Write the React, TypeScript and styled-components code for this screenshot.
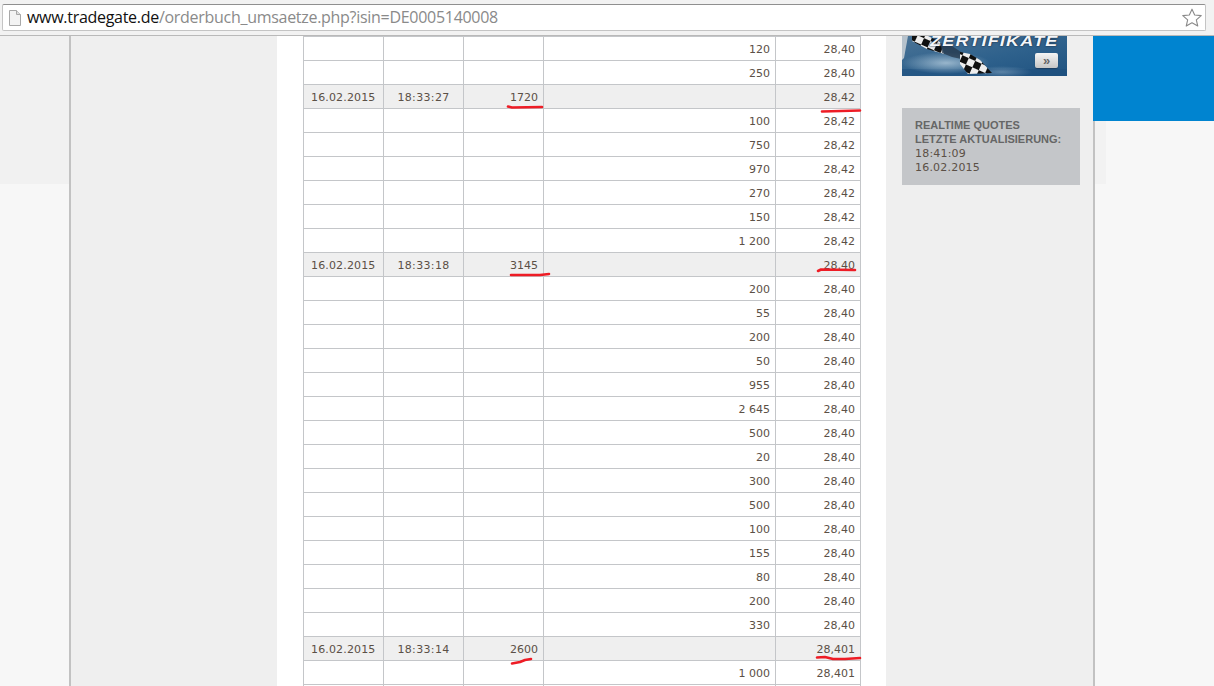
import React from 'react';
import styled, { createGlobalStyle } from 'styled-components';

const Global = createGlobalStyle`
  html, body { margin: 0; padding: 0; height: 100%; overflow: hidden; background: #f7f7f7; }
  #root { height: 100%; }
`;
const Screen = styled.div`
  width: 1214px; height: 686px; display: flex; flex-direction: column; overflow: hidden;
`;
const BrowserBar = styled.header`
  height: 36px; box-sizing: border-box; flex: none; padding: 4px 8px 4px 2px;
  background: #f2f2f2; border-bottom: 1px solid #b9b9b9;
`;
const Omnibox = styled.div`
  height: 27px; box-sizing: border-box; display: flex; align-items: center; gap: 7px; padding: 0 3px 0 6px;
  background: #fff; border: 1px solid #c4c4c4; border-top-color: #8f8f8f; border-radius: 2px;
`;
const Url = styled.div`
  flex: 1; margin: -2px 0 0 -1px; font: 16px/20px "Open Sans", "Noto Sans", sans-serif; letter-spacing: -0.29px; color: #8a8a8a;
  b { font-weight: 400; color: #111; }
`;
const Page = styled.main`
  position: relative; flex: 1; min-height: 0; display: flex; overflow: hidden;
`;
const LeftMargin = styled.div`
  width: 69px; flex: none; display: flex; flex-direction: column;
`;
const MarginBand = styled.div<{ $h: number; $c: string; $w?: number }>`
  height: ${p => p.$h}px; flex: none; background: ${p => p.$c};
  ${p => (p.$w ? `width: ${p.$w}px;` : '')}
`;
const MarginRest = styled.div`
  flex: 1; background: #f7f7f7;
`;
const Gutter = styled.div`
  width: 208px; flex: none; box-sizing: border-box; background: #efefef; border-left: 2px solid #c2c2c2;
`;
const Content = styled.div`
  width: 609px; flex: none; box-sizing: border-box; background: #fff; padding-left: 26px;
`;
const Table = styled.table`
  border-collapse: collapse; table-layout: fixed; width: 558px;
  font: 11px/14px "DejaVu Sans", Verdana, sans-serif; color: #5b5046;
`;
const Row = styled.tr<{ $head?: boolean }>`
  height: 24px; background: ${p => (p.$head ? '#efefef' : '#fff')};
`;
const Cell = styled.td<{ $right?: boolean; $center?: boolean; $spread?: number }>`
  box-sizing: border-box; border: 1px solid #c4c6c9; padding: 2px 5px 0 ${p => (p.$center ? '5px' : '7px')};
  text-align: ${p => (p.$right ? 'right' : p.$center ? 'center' : 'left')}; white-space: nowrap;
  letter-spacing: ${p => p.$spread ?? 0}px;
`;
const Sidebar = styled.aside`
  width: 207px; flex: none; box-sizing: border-box; background: #efefef; padding-left: 16px;
  display: flex; flex-direction: column; gap: 32px;
`;
const Banner = styled.div`
  position: relative; width: 165px; height: 40px; overflow: hidden; flex: none;
`;
const BannerArt = styled.svg`
  display: block; width: 165px; height: 40px;
`;
const BannerTitle = styled.span`
  position: absolute; left: 28px; top: 0; font: italic 700 15px/10px "Liberation Sans", Arial, sans-serif;
  letter-spacing: 1px; color: #f4f6f9; text-shadow: 0 0 2px #1b2f47, 0 0 1px #1b2f47; white-space: nowrap;
  transform: scaleX(1.2); transform-origin: left center;
`;
const BannerButton = styled.span`
  position: absolute; left: 133px; top: 17px; width: 23px; height: 15px; border-radius: 2px;
  background: linear-gradient(#f5f5f5, #c6c6c6); display: flex; align-items: center; justify-content: center;
  font: 700 13px/12px "Liberation Sans", Arial, sans-serif; color: #666; box-shadow: 0 1px 1px #1c3e60;
`;
const InfoBox = styled.div`
  width: 178px; height: 77px; box-sizing: border-box; background: #c4c6c9; padding: 10px 13px 0;
  font: 11px/13.5px "DejaVu Sans", Verdana, sans-serif; color: #5b5046;
`;
const InfoTitle = styled.div`
  font: 700 11px/14px "Liberation Sans", Arial, sans-serif; color: #666; text-transform: uppercase; white-space: nowrap;
`;
const InfoValues = styled.div`
  margin-top: 1px; letter-spacing: 0.2px;
`;
const RightMargin = styled.div`
  flex: 1; display: flex; flex-direction: column;
`;
const RightLower = styled.div`
  flex: 1; box-sizing: border-box; border-left: 2px solid #c2c2c2; background: #f7f7f7;
`;
const Marks = styled.svg`
  position: absolute; left: 0; top: -36px; width: 1214px; height: 686px; pointer-events: none;
`;

type R = { d?: string; t?: string; v?: string; q?: string; p: string };
const rows: R[] = [
  { q: '120', p: '28,40' }, { q: '250', p: '28,40' },
  { d: '16.02.2015', t: '18:33:27', v: '1720', p: '28,42' },
  ...['100', '750', '970', '270', '150', '1 200'].map(q => ({ q, p: '28,42' })),
  { d: '16.02.2015', t: '18:33:18', v: '3145', p: '28,40' },
  ...['200', '55', '200', '50', '955', '2 645', '500', '20', '300', '500', '100', '155', '80', '200', '330'].map(q => ({ q, p: '28,40' })),
  { d: '16.02.2015', t: '18:33:14', v: '2600', p: '28,401' },
  { q: '1 000', p: '28,401' }, { q: '', p: '' },
];
const strokes = [
  'M508 106.5 L512 107.5 L542 107',
  'M822 111.5 L860 110.5',
  'M511 275 L540 275 L549 274',
  'M818 271 L821 269.5 L855 270',
  'M512 663.5 L520 662 L525 660 L531 659',
  'M817 657.5 L825 657 L833 659 L845 659 L860 658',
];

export default function App() {
  return (
    <Screen>
      <Global />
      <BrowserBar>
        <Omnibox>
          <svg width="12" height="16" viewBox="0 0 12 16">
            <path d="M.5.5h7l4 4v11H.5z" fill="#f3f3f3" stroke="#a8a8a8" />
            <path d="M7.5.5v4h4" fill="#dedede" stroke="#a8a8a8" />
          </svg>
          <Url><b>www.tradegate.de</b>/orderbuch_umsaetze.php?isin=DE0005140008</Url>
          <svg width="20" height="19" viewBox="0 0 18 17">
            <path d="M9 1l2.4 5.2 5.9.6-4.4 3.8 1.3 5.6L9 13.3l-5.2 2.9 1.3-5.6L.7 6.8l5.9-.6z" fill="#fff" stroke="#8a8a8a" strokeWidth="1" strokeLinejoin="round" />
          </svg>
        </Omnibox>
      </BrowserBar>
      <Page>
        <LeftMargin>
          <MarginBand $h={148} $c="#f1f1f1" />
          <MarginRest />
        </LeftMargin>
        <Gutter />
        <Content>
          <Table>
            <colgroup><col width="80" /><col width="80" /><col width="80" /><col width="232" /><col width="85" /></colgroup>
            <tbody>
              {rows.map((r, i) => (
                <Row key={i} $head={!!r.d}>
                  <Cell $spread={0.15}>{r.d}</Cell>
                  <Cell $center $spread={0.35}>{r.t}</Cell>
                  <Cell $right>{r.v}</Cell>
                  <Cell $right>{r.q}</Cell>
                  <Cell $right>{r.p}</Cell>
                </Row>
              ))}
            </tbody>
          </Table>
        </Content>
        <Sidebar>
          <Banner>
            <BannerArt viewBox="0 0 165 40">
              <defs>
                <linearGradient id="sky" x1="0" y1="0" x2="1" y2="1">
                  <stop offset="0" stopColor="#4a7396" />
                  <stop offset="0.55" stopColor="#2e618c" />
                  <stop offset="1" stopColor="#1f5280" />
                </linearGradient>
                <radialGradient id="cloud" cx="0.5" cy="0.5" r="0.5">
                  <stop offset="0" stopColor="#a4bfd3" stopOpacity=".9" />
                  <stop offset="1" stopColor="#a4bfd3" stopOpacity="0" />
                </radialGradient>
                <pattern id="check" width="14" height="14" patternUnits="userSpaceOnUse" patternTransform="rotate(24)">
                  <rect width="14" height="14" fill="#eeeeee" />
                  <rect width="7" height="7" fill="#101010" />
                  <rect x="7" y="7" width="7" height="7" fill="#101010" />
                </pattern>
              </defs>
              <rect width="165" height="40" fill="url(#sky)" />
              <rect y="33" width="165" height="7" fill="#1d4f7e" opacity=".55" />
              <ellipse cx="44" cy="27" rx="44" ry="11" fill="url(#cloud)" />
              <ellipse cx="100" cy="36" rx="30" ry="6" fill="url(#cloud)" opacity=".5" />
              <path d="M0 0h6L2 22 0 24z" fill="#b6c2cc" />
              <path d="M10 0h16l12 6 4 12-17-5-15-8z" fill="url(#check)" />
              <path d="M38 7l12 3 12 8 2 6-14-3-10-4z" fill="#26374a" opacity=".75" />
              <path d="M58 16l10 2 10 6 12 13-24 1-8-10z" fill="url(#check)" />
            </BannerArt>
            <BannerTitle>ZERTIFIKATE</BannerTitle>
            <BannerButton>»</BannerButton>
          </Banner>
          <InfoBox>
            <InfoTitle>Realtime Quotes</InfoTitle>
            <InfoTitle>Letzte Aktualisierung:</InfoTitle>
            <InfoValues>18:41:09<br />16.02.2015</InfoValues>
          </InfoBox>
        </Sidebar>
        <RightMargin>
          <MarginBand $h={85} $c="#0084d0" />
          <RightLower>
            <MarginBand $h={63} $w={11} $c="#f2f2f2" />
          </RightLower>
        </RightMargin>
        <Marks viewBox="0 0 1214 686">
          {strokes.map((d, i) => (
            <path key={i} d={d} fill="none" stroke="#ee1c25" strokeWidth="2.6" strokeLinecap="round" strokeLinejoin="round" />
          ))}
        </Marks>
      </Page>
    </Screen>
  );
}
